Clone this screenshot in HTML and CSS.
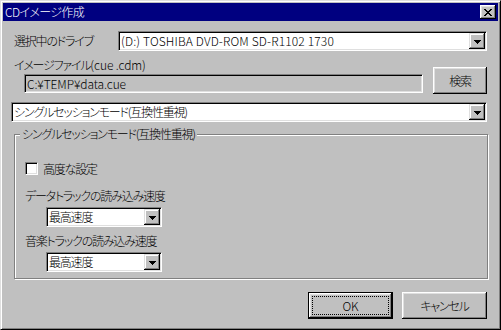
FILE: index.html
```html
<!DOCTYPE html>
<html lang="ja">
<head>
    <meta charset="UTF-8">
    <title>CDイメージ作成</title>
    <link rel="stylesheet" href="styles.css">
</head>
<body>
    <div class="window">
        <div class="titlebar">
            <span class="title">CDイメージ作成</span>
            <span class="close-btn">
                <svg width="8" height="7" viewBox="0 0 8 7"><path d="M0 0h2v1h-2zM6 0h2v1h-2zM1 1h2v1h-2zM5 1h2v1h-2zM2 2h4v1h-4zM3 3h2v1h-2zM2 4h4v1h-4zM1 5h2v1h-2zM5 5h2v1h-2zM0 6h2v1h-2zM6 6h2v1h-2z" fill="#000"/></svg>
            </span>
        </div>

        <div class="client">
            <div class="drive-row">
                <span class="drive-label">選択中のドライブ</span>
                <div class="combo drive-combo">
                    <span class="combo-value drive-value">(D:) TOSHIBA DVD-ROM SD-R1102 1730</span>
                    <span class="drop"><svg width="7" height="4" viewBox="0 0 7 4"><path d="M0 0h7v1h-1v1h-1v1h-1v1h-1v-1h-1v-1h-1v-1h-1z" fill="#000"/></svg></span>
                </div>
            </div>

            <div class="file-block">
                <div class="file-left">
                    <div class="file-label">イメージファイル<span class="latin">(cue .cdm)</span></div>
                    <div class="textbox latin">C:¥TEMP¥data.cue</div>
                </div>
                <div class="button search-btn">検索</div>
            </div>

            <div class="combo session-combo">
                <span class="combo-value">シングルセッションモード(互換性重視)</span>
                <span class="drop"><svg width="7" height="4" viewBox="0 0 7 4"><path d="M0 0h7v1h-1v1h-1v1h-1v1h-1v-1h-1v-1h-1v-1h-1z" fill="#000"/></svg></span>
            </div>

            <div class="group">
                <span class="group-title">シングルセッションモード(互換性重視)</span>

                <div class="check-row">
                    <span class="checkbox"></span>
                    <span>高度な設定</span>
                </div>

                <div class="speed-label">データトラックの読み込み速度</div>
                <div class="combo speed-combo">
                    <span class="combo-value">最高速度</span>
                    <span class="drop"><svg width="7" height="4" viewBox="0 0 7 4"><path d="M0 0h7v1h-1v1h-1v1h-1v1h-1v-1h-1v-1h-1v-1h-1z" fill="#000"/></svg></span>
                </div>

                <div class="speed-label">音楽トラックの読み込み速度</div>
                <div class="combo speed-combo">
                    <span class="combo-value">最高速度</span>
                    <span class="drop"><svg width="7" height="4" viewBox="0 0 7 4"><path d="M0 0h7v1h-1v1h-1v1h-1v1h-1v-1h-1v-1h-1v-1h-1z" fill="#000"/></svg></span>
                </div>
            </div>

            <div class="dialog-buttons">
                <div class="button default-btn"><span class="focus latin">OK</span></div>
                <div class="button">キャンセル</div>
            </div>
        </div>
    </div>
</body>
</html>
```

FILE: styles.css
```css
body {
    margin: 0;
    background: #c0c0c0;
    font-family: "Noto Sans CJK JP", sans-serif;
    font-size: 12px;
    font-weight: 300;
    line-height: 14px;
    letter-spacing: -1.2px;
    color: #000;
    font-feature-settings: "palt";
}
.latin {
    letter-spacing: -0.1px;
}

/* window frame */
.window {
    width: 501px;
    height: 330px;
    box-sizing: border-box;
    border: 1px solid;
    border-color: #dfdfdf #000 #000 #dfdfdf;
    box-shadow: inset 1px 1px #fff, inset -1px -1px #808080;
    padding: 2px;
    display: flex;
    flex-direction: column;
}
.titlebar {
    height: 18px;
    background: #000080;
    color: #fff;
    display: flex;
    align-items: center;
    padding: 0 2px;
}
.title {
    flex: 1;
    letter-spacing: -0.6px;
}
.close-btn {
    width: 16px;
    height: 14px;
    background: #c0c0c0;
    box-shadow: inset -1px -1px #000, inset 1px 1px #fff, inset -2px -2px #808080, inset 2px 2px #dfdfdf;
    display: flex;
    align-items: center;
    justify-content: center;
}

.client {
    flex: 1;
    display: flex;
    flex-direction: column;
    padding: 10px 11px 0 8px;
}

/* controls */
.combo {
    display: flex;
    height: 20px;
    box-sizing: border-box;
    background: #fff;
    border: 1px solid;
    border-color: #808080 #fff #fff #808080;
    box-shadow: inset 1px 1px #000, inset -1px -1px #dfdfdf;
    padding: 1px;
}
.combo-value {
    flex: 1;
    padding-left: 1px;
    display: flex;
    align-items: center;
    white-space: nowrap;
}
.drive-value {
    letter-spacing: 0.15px;
}
.drop {
    width: 16px;
    background: #c0c0c0;
    box-shadow: inset -1px -1px #000, inset 1px 1px #dfdfdf, inset -2px -2px #808080, inset 2px 2px #fff;
    display: flex;
    align-items: center;
    justify-content: center;
}
.drop svg {
    margin-top: 1px;
}
.textbox {
    height: 19px;
    box-sizing: border-box;
    border: 1px solid;
    border-color: #808080 #fff #fff #808080;
    box-shadow: inset 1px 1px #000, inset -1px -1px #dfdfdf;
    padding: 0 2px;
    display: flex;
    align-items: center;
}
.button {
    height: 27px;
    width: 85px;
    box-sizing: border-box;
    background: #c0c0c0;
    box-shadow: inset -1px -1px #000, inset 1px 1px #fff, inset -2px -2px #808080, inset 2px 2px #dfdfdf;
    display: flex;
    align-items: center;
    justify-content: center;
}
.default-btn {
    border: 1px solid #000;
    padding: 3px;
}
.focus {
    flex: 1;
    align-self: stretch;
    border: 1px dotted #000;
    display: flex;
    align-items: center;
    justify-content: center;
}

/* rows */
.drive-row {
    display: flex;
    align-items: center;
}
.drive-label {
    margin-left: 3px;
}
.drive-combo {
    margin-left: auto;
    width: 369px;
}
.file-block {
    display: flex;
    align-items: flex-start;
    margin-top: 7px;
}
.file-left {
    margin-left: 3px;
}
.file-label {
    height: 14px;
}
.textbox {
    margin: 2px 0 0 10px;
    width: 399px;
}
.search-btn {
    width: 54px;
    margin: 9px 0 0 auto;
}
.session-combo {
    margin-top: 8px;
}

/* group box */
.group {
    margin: 12px 0 0 3px;
    width: 474px;
    height: 145px;
    box-sizing: border-box;
    border: 1px solid #808080;
    box-shadow: inset 1px 1px #fff, 1px 1px #fff;
    padding: 0 0 0 10px;
    display: flex;
    flex-direction: column;
    align-items: flex-start;
}
.group-title {
    margin: -8px 0 0 -5px;
    padding: 0 2px;
    background: #c0c0c0;
}
.check-row {
    display: flex;
    align-items: center;
    height: 13px;
    margin-top: 21px;
}
.checkbox {
    width: 13px;
    height: 13px;
    box-sizing: border-box;
    background: #fff;
    border: 1px solid;
    border-color: #808080 #fff #fff #808080;
    box-shadow: inset 1px 1px #000, inset -1px -1px #dfdfdf;
    margin-right: 5px;
}
.speed-label {
    margin-top: 14px;
}
.speed-combo {
    width: 116px;
    margin: 4px 0 0 21px;
}
.speed-combo + .speed-label {
    margin-top: 7px;
}

.dialog-buttons {
    display: flex;
    justify-content: flex-end;
    gap: 9px;
    margin-top: 13px;
}
```
